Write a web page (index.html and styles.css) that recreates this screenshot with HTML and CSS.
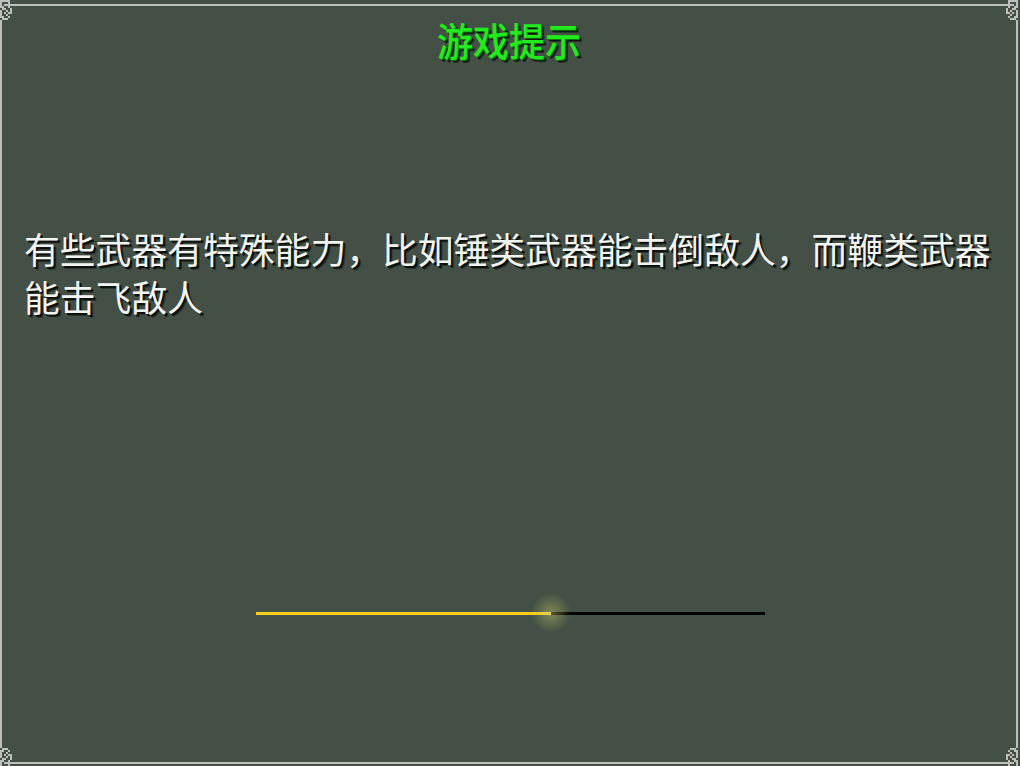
FILE: index.html
```html
<!DOCTYPE html>
<html lang="zh-CN">
<head>
	<meta charset="UTF-8">
	<title>游戏提示</title>
	<link rel="stylesheet" href="styles.css">
</head>
<body>
	<div class="screen">
		<div class="frame">
			<h1 class="title">游戏提示</h1>
			<p class="tip">有些武器有特殊能力，比如锤类武器能击倒敌人，而鞭类武器能击飞敌人</p>
			<div class="loader">
				<div class="loader_fill" style="width:58%"><span class="loader_glow"></span></div>
			</div>
		</div>

		<!-- 四个角的花纹，同一个图形翻转使用 -->
		<svg class="corner corner_tl" width="16" height="28" viewBox="0 0 16 28">
			<g class="knot">
				<rect class="knot_bg" x="0" y="0" width="16" height="28"/>
				<rect x="0" y="0" width="10" height="2"/>
				<rect x="0" y="2" width="2" height="2"/><rect x="8" y="2" width="2" height="2"/>
				<rect x="0" y="4" width="2" height="2"/><rect x="4" y="4" width="12" height="2"/>
				<rect x="0" y="6" width="4" height="2"/><rect x="8" y="6" width="2" height="2"/>
				<rect x="2" y="8" width="4" height="2"/><rect x="10" y="8" width="2" height="2"/>
				<rect x="0" y="10" width="2" height="2"/><rect x="6" y="10" width="2" height="2"/><rect x="10" y="10" width="2" height="2"/>
				<rect x="0" y="12" width="2" height="2"/><rect x="4" y="12" width="2" height="2"/><rect x="8" y="12" width="4" height="2"/>
				<rect x="0" y="14" width="2" height="2"/><rect x="6" y="14" width="2" height="2"/>
				<rect x="0" y="16" width="4" height="2"/><rect x="8" y="16" width="2" height="2"/>
				<rect x="2" y="18" width="6" height="2"/>
				<rect x="0" y="20" width="2" height="8"/>
			</g>
		</svg>
		<svg class="corner corner_tr" width="16" height="28" viewBox="0 0 16 28"><use href="#k"/></svg>
		<svg class="corner corner_bl" width="16" height="28" viewBox="0 0 16 28"><use href="#k"/></svg>
		<svg class="corner corner_br" width="16" height="28" viewBox="0 0 16 28"><use href="#k"/></svg>
	</div>

	<script type="text/javascript">
		// 把左上角的花纹复制到其余三个角
		var knot=document.querySelector(".knot");
		knot.setAttribute("id","k");
	</script>
</body>
</html>
```

FILE: styles.css
```css
*{
	margin:0;
	padding:0;
}

body{
	background-color:#445045;
	font-family:"Noto Sans CJK SC","Noto Sans",sans-serif;
}

.screen{
	position:relative;
	width:1020px;
	height:766px;
	overflow:hidden;
}

.frame{
	box-sizing:border-box;
	margin-top:4px;
	width:1018px;
	height:760px;
	border:solid 2px #bdbfbd;
	display:flex;
	flex-direction:column;
}

.title{
	padding-top:10px;
	font-size:36px;
	line-height:44px;
	font-weight:500;
	text-align:center;
	color:#22ea1e;
	transform:scaleY(1.08);
	text-shadow:1px 1px 0 #0c7a0c,2px 2px 0 #0a140a,3px 3px 0 rgba(10,20,10,.5);
}

.tip{
	margin-top:164px;
	padding:0 6px 0 22px;
	font-size:35.8px;
	line-height:48px;
	color:#f2f4f2;
	text-shadow:2px 2px 0 #0e120e,3px 3px 0 rgba(14,18,14,.4);
}

.loader{
	margin:292px 0 0 254px;
	width:509px;
	height:3px;
	background-color:#000;
}

.loader_fill{
	position:relative;
	height:100%;
	background:linear-gradient(to right,#f6cd1c 0,#f6cd1c 96%,#efcf58 100%);
}

.loader_glow{
	position:absolute;
	right:-20px;
	top:-19px;
	width:40px;
	height:40px;
	background:radial-gradient(closest-side,rgba(200,205,110,.45),rgba(200,205,110,.2) 55%,rgba(200,205,110,0));
}

.corner{
	position:absolute;
	display:block;
}
.corner rect{
	fill:#bdbfbd;
}
.corner .knot_bg{
	fill:#445045;
}
.corner_tl{
	top:0;
	left:0;
}
.corner_tr{
	top:0;
	right:2px;
	transform:scaleX(-1);
}
.corner_bl{
	bottom:-2px;
	left:0;
	transform:scaleY(-1);
}
.corner_br{
	bottom:-2px;
	right:2px;
	transform:scale(-1,-1);
}
```
